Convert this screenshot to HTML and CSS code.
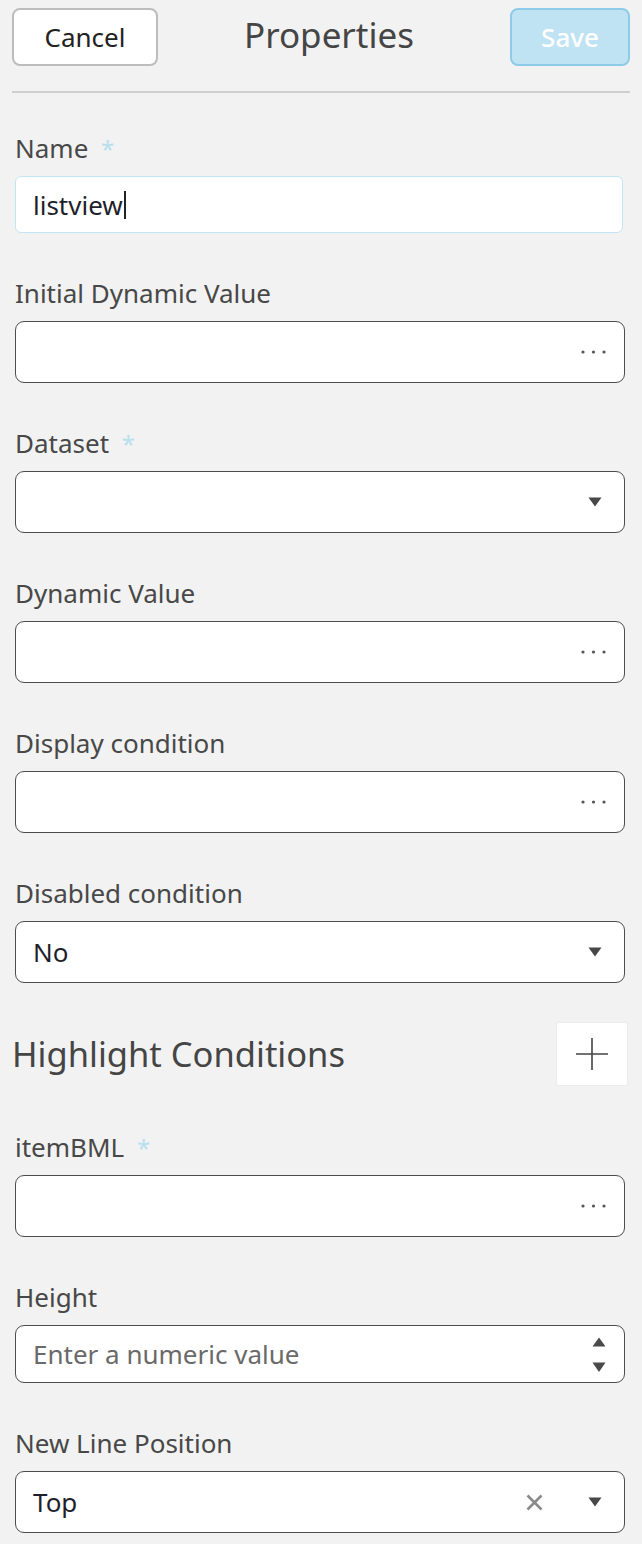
FILE: index.html
```html
<!DOCTYPE html>
<html lang="en">
<head>
<meta charset="utf-8">
<title>Properties</title>
<link rel="stylesheet" href="styles.css">
</head>
<body>
<header class="topbar">
  <button class="btn btn-cancel" type="button">Cancel</button>
  <h1 class="title">Properties</h1>
  <button class="btn btn-save" type="button">Save</button>
</header>
<hr class="divider">
<main class="form">
  <div class="field">
    <label class="label">Name <span class="req">*</span></label>
    <div class="control control-focus"><span class="value">listview</span><span class="caret"></span></div>
  </div>
  <div class="field">
    <label class="label">Initial Dynamic Value</label>
    <div class="control"><span class="spacer"></span>
      <svg class="icon-dots" width="28" height="6" viewBox="0 0 28 6"><circle cx="3" cy="3" r="1.6"/><circle cx="13.5" cy="3" r="1.6"/><circle cx="24" cy="3" r="1.6"/></svg>
    </div>
  </div>
  <div class="field">
    <label class="label">Dataset <span class="req">*</span></label>
    <div class="control"><span class="spacer"></span>
      <svg class="icon-caret" width="14" height="10" viewBox="0 0 14 10"><path d="M0.5 0.5h13L7 9.5z"/></svg>
    </div>
  </div>
  <div class="field">
    <label class="label">Dynamic Value</label>
    <div class="control"><span class="spacer"></span>
      <svg class="icon-dots" width="28" height="6" viewBox="0 0 28 6"><circle cx="3" cy="3" r="1.6"/><circle cx="13.5" cy="3" r="1.6"/><circle cx="24" cy="3" r="1.6"/></svg>
    </div>
  </div>
  <div class="field">
    <label class="label">Display condition</label>
    <div class="control"><span class="spacer"></span>
      <svg class="icon-dots" width="28" height="6" viewBox="0 0 28 6"><circle cx="3" cy="3" r="1.6"/><circle cx="13.5" cy="3" r="1.6"/><circle cx="24" cy="3" r="1.6"/></svg>
    </div>
  </div>
  <div class="field">
    <label class="label">Disabled condition</label>
    <div class="control"><span class="value">No</span><span class="spacer"></span>
      <svg class="icon-caret" width="14" height="10" viewBox="0 0 14 10"><path d="M0.5 0.5h13L7 9.5z"/></svg>
    </div>
  </div>

  <div class="section-head">
    <h2 class="section-title">Highlight Conditions</h2>
    <button class="btn-add" type="button" aria-label="Add">
      <svg width="34" height="34" viewBox="0 0 34 34"><path d="M17 1v32M1 17h32" stroke="#444" stroke-width="1.6" fill="none"/></svg>
    </button>
  </div>

  <div class="field">
    <label class="label">itemBML <span class="req">*</span></label>
    <div class="control"><span class="spacer"></span>
      <svg class="icon-dots" width="28" height="6" viewBox="0 0 28 6"><circle cx="3" cy="3" r="1.6"/><circle cx="13.5" cy="3" r="1.6"/><circle cx="24" cy="3" r="1.6"/></svg>
    </div>
  </div>
  <div class="field">
    <label class="label">Height</label>
    <div class="control control-num"><span class="placeholder">Enter a numeric value</span><span class="spacer"></span>
      <svg class="icon-spin" width="14" height="36" viewBox="0 0 14 36"><path d="M0.5 9.5h13L7 0.5z"/><path d="M0.5 25.5h13L7 35z"/></svg>
    </div>
  </div>
  <div class="field">
    <label class="label">New Line Position</label>
    <div class="control"><span class="value">Top</span><span class="spacer"></span>
      <svg class="icon-x" width="17" height="17" viewBox="0 0 17 17"><path d="M1.5 1.5l14 14M15.5 1.5l-14 14" stroke="#8a8a8a" stroke-width="2.6" fill="none"/></svg>
      <svg class="icon-caret" width="14" height="10" viewBox="0 0 14 10"><path d="M0.5 0.5h13L7 9.5z"/></svg>
    </div>
  </div>
</main>
</body>
</html>
```

FILE: styles.css
```css
* { box-sizing: border-box; }

html, body {
  margin: 0;
  padding: 0;
  background: #f2f2f2;
}

body {
  font-family: "Noto Sans", "Open Sans", "DejaVu Sans", sans-serif;
  color: #484848;
  width: 642px;
}

.topbar {
  display: flex;
  align-items: center;
  justify-content: space-between;
  padding: 8px 12px 0 12px;
}

.btn {
  font-family: inherit;
  font-size: 26px;
  height: 58px;
  border-radius: 8px;
  padding: 0;
  cursor: pointer;
}

.btn-cancel {
  width: 146px;
  background: #ffffff;
  border: 2px solid #bdbdbd;
  color: #222;
}

.btn-save {
  width: 120px;
  background: #bfe3f2;
  border: 2px solid #8ecbe7;
  color: #ffffff;
  font-weight: 500;
}

.title {
  margin: 0;
  font-size: 35px;
  line-height: 44px;
  font-weight: 400;
  color: #454545;
  transform: translate(-5px, -2px);
}

.divider {
  margin: 25px 12px 0 12px;
  border: 0;
  height: 2px;
  background: #cfcfd2;
}

.form {
  padding: 39px 17px 0 15px;
}

.field {
  display: flex;
  flex-direction: column;
  gap: 12px;
  margin-bottom: 44px;
}

.label {
  font-size: 26px;
  line-height: 32px;
  height: 32px;
  color: #484848;
}

.req {
  color: #b8dfef;
  margin-left: 6px;
  font-size: 24px;
  line-height: 1;
}

.control {
  display: flex;
  align-items: center;
  height: 62px;
  background: #ffffff;
  border: 1px solid #4d4d4d;
  border-radius: 9px;
  padding: 0 16px 0 17px;
  font-size: 26px;
}

.control-focus {
  height: 57px;
  width: 608px;
  border-color: #c3e5f1;
  border-radius: 6px;
}

.control-num {
  height: 58px;
  padding-right: 18px;
}

.value {
  color: #1f1f2c;
}

.placeholder {
  color: #6a6a6a;
}

.caret {
  display: inline-block;
  width: 2px;
  height: 28px;
  background: #222;
  margin-left: 1px;
}

.spacer { flex: 1; }

.icon-dots { fill: #555; margin-right: 0; }
.icon-caret { fill: #474747; margin-right: 6px; }
.icon-spin { fill: #4a4a4a; margin-top: 2px; }
.icon-x { margin-right: 45px; }

.section-head {
  display: flex;
  align-items: center;
  justify-content: space-between;
  margin: -5px -3px 45px -3px;
}

.section-title {
  margin: 0;
  font-size: 34.5px;
  line-height: 44px;
  font-weight: 400;
  color: #454545;
}

.btn-add {
  width: 72px;
  height: 64px;
  background: #ffffff;
  border: 1px solid #ececec;
  border-radius: 3px;
  display: flex;
  align-items: center;
  justify-content: center;
  padding: 0;
}
```
